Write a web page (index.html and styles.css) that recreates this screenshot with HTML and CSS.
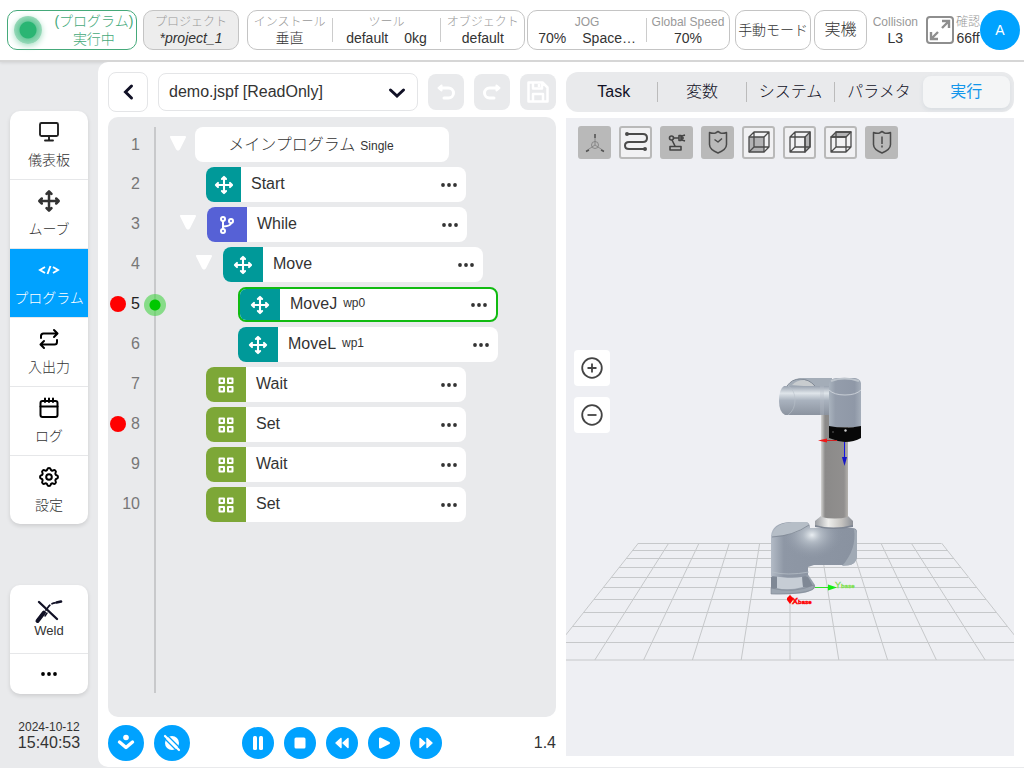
FILE: index.html
```html
<!DOCTYPE html>
<html lang="ja">
<head>
<meta charset="utf-8">
<meta name="viewport" content="width=device-width, initial-scale=1">
<title>demo.jspf</title>
<link rel="stylesheet" href="styles.css">
</head>
<body>
<svg class="defs" aria-hidden="true">
  <symbol id="i-move" viewBox="0 0 24 24"><path d="M12 3v18M3 12h18M9.500 4.800L12 2.300l2.500 2.500M9.500 19.200l2.500 2.500 2.500-2.500M4.800 9.500L2.300 12l2.500 2.500M19.200 9.500l2.500 2.500-2.500 2.500" fill="none" stroke="currentColor" stroke-width="2.500" stroke-linecap="round" stroke-linejoin="round"/></symbol>
  <symbol id="i-grid" viewBox="0 0 18 18"><path d="M2.500 2.500h4.500v4.500H2.500zM11 2.500h4.500v4.500H11zM2.500 11h4.500v4.500H2.500zM11 11h4.500v4.500H11z" fill="none" stroke="currentColor" stroke-width="2" stroke-linejoin="round"/></symbol>
  <symbol id="i-dots" viewBox="0 0 18 6"><circle cx="3" cy="3" r="1.900"/><circle cx="9" cy="3" r="1.900"/><circle cx="15" cy="3" r="1.900"/></symbol>
  <symbol id="i-tri" viewBox="0 0 18 15"><path d="M2 1h14L10 13q-1 1.400-2 0z" fill="#fff" stroke="#fff" stroke-width="2" stroke-linejoin="round"/></symbol>
</svg>

<header class="topbar">
  <button class="box status"><span class="lamp"></span><span class="stack status-text"><span>(プログラム)</span><span>実行中</span></span></button>
  <button class="box stack project"><span class="cap">プロジェクト</span><em>*project_1</em></button>
  <div class="box group setup">
    <div class="stack cell"><span class="cap">インストール</span><span>垂直</span></div>
    <div class="stack cell wide"><span class="cap">ツール</span><span class="pair"><span>default</span><span>0kg</span></span></div>
    <div class="stack cell"><span class="cap">オブジェクト</span><span>default</span></div>
  </div>
  <div class="box group jog">
    <div class="stack cell jog-cell"><span class="cap">JOG</span><span class="pair"><span>70%</span><span>Space…</span></span></div>
    <div class="stack cell"><span class="cap">Global Speed</span><span>70%</span></div>
  </div>
  <button class="box mode">手動モード</button>
  <button class="box real">実機</button>
  <div class="stack collision"><span class="cap">Collision</span><span>L3</span></div>
  <button class="expand" aria-label="全画面">
    <svg width="30" height="30" viewBox="0 0 30 30" fill="none" stroke="#8e8e8e" stroke-width="2"><rect x="2" y="2" width="26" height="26" rx="3"/><path d="M17 6h7v7M24 6l-7 7M6 17v7h7M6 24l7-7" stroke-width="2.400"/></svg>
  </button>
  <div class="stack check"><span class="cap">確認</span><span>66ff</span></div>
  <button class="avatar">A</button>
</header>

<div class="shell">
  <aside class="side">
    <nav class="card nav">
      <a href="#dash" class="nav-item"><svg width="24" height="24" viewBox="0 0 24 24" fill="none" stroke="#222" stroke-width="1.900" stroke-linecap="round"><rect x="3" y="3" width="18" height="13" rx="1.500"/><path d="M12 16v4M8 20.500h8"/></svg>儀表板</a>
      <a href="#move" class="nav-item"><svg width="24" height="24"><use href="#i-move"/></svg>ムーブ</a>
      <a href="#program" class="nav-item active" aria-current="page"><svg width="24" height="24" viewBox="0 0 24 24" fill="none" stroke="#fff" stroke-width="1.900"><path d="M8 9l-5 3 5 3M16 9l5 3-5 3M13.500 8l-3 8"/></svg>プログラム</a>
      <a href="#io" class="nav-item"><svg width="24" height="24" viewBox="0 0 24 24" fill="none" stroke="#000" stroke-width="2" stroke-linecap="round" stroke-linejoin="round"><path d="M17 3l3.500 3.500L17 10M4 11V9q0-2.500 2.500-2.500H20M7 21l-3.500-3.500L7 14M20 13v2q0 2.500-2.500 2.500H4"/></svg>入出力</a>
      <a href="#log" class="nav-item"><svg width="24" height="24" viewBox="0 0 24 24" fill="none" stroke="#000" stroke-width="2" stroke-linecap="round"><rect x="3.500" y="5" width="17" height="16" rx="2"/><path d="M3.500 10.500h17M8 2.500V6M12 2.500V6M16 2.500V6"/></svg>ログ</a>
      <a href="#settings" class="nav-item"><svg width="24" height="24" viewBox="0 0 24 24" fill="none" stroke="#000" stroke-width="2" stroke-linejoin="round"><circle cx="12" cy="12" r="2.800"/><path d="M10.325 4.317c.426-1.756 2.924-1.756 3.350 0a1.724 1.724 0 0 0 2.573 1.066c1.543-.94 3.310.826 2.370 2.370a1.724 1.724 0 0 0 1.065 2.572c1.756.426 1.756 2.924 0 3.350a1.724 1.724 0 0 0-1.066 2.573c.94 1.543-.826 3.310-2.370 2.370a1.724 1.724 0 0 0-2.572 1.065c-.426 1.756-2.924 1.756-3.350 0a1.724 1.724 0 0 0-2.573-1.066c-1.543.94-3.310-.826-2.370-2.370a1.724 1.724 0 0 0-1.065-2.572c-1.756-.426-1.756-2.924 0-3.350a1.724 1.724 0 0 0 1.066-2.573c-.94-1.543.826-3.310 2.370-2.370 1 .608 2.296.07 2.572-1.065z"/></svg>設定</a>
    </nav>
    <div class="card tools">
      <button class="weld"><svg width="30" height="24" viewBox="0 0 30 24" fill="none" stroke="#111126" stroke-linecap="round"><path d="M5 2l18 17" stroke-width="2.400"/><path d="M3.500 21L10 12.500" stroke-width="4"/><path d="M12 10L15 6Q18 3 21 2.800" stroke-width="1.800" stroke-dasharray="6 2.800"/><path d="M22.500 2.500L27 1.500" stroke-width="2.600"/><path d="M11 16l2-3" stroke-width="1.500"/></svg>Weld</button>
      <button class="more" aria-label="その他"><svg width="18" height="6"><use href="#i-dots"/></svg></button>
    </div>
    <div class="clock"><span class="date">2024-10-12</span><time>15:40:53</time></div>
  </aside>

  <main class="main">
    <section class="editor">
      <div class="filebar">
        <button class="back" aria-label="戻る"><svg width="12" height="18" viewBox="0 0 12 18" fill="none" stroke="#111126" stroke-width="3" stroke-linecap="round"><path d="M9.500 3L3.500 9l6 6"/></svg></button>
        <label class="file"><select aria-label="ファイル"><option>demo.jspf [ReadOnly]</option></select><svg class="chev" width="18" height="12" viewBox="0 0 18 12" fill="none" stroke="#111126" stroke-width="3" stroke-linecap="round"><path d="M2.500 3L9 9l6.500-6"/></svg></label>
        <button class="tool" aria-label="元に戻す"><svg width="20" height="20" viewBox="0 0 20 20" fill="none" stroke="#fff" stroke-width="3" stroke-linecap="round" stroke-linejoin="round"><path d="M4 6h8.500a5 5 0 0 1 0 10H8"/><path d="M5.500 3.500v5L2.500 6z" fill="#fff" stroke-width="2"/></svg></button>
        <button class="tool" aria-label="やり直し"><svg width="20" height="20" viewBox="0 0 20 20" fill="none" stroke="#fff" stroke-width="3" stroke-linecap="round" stroke-linejoin="round"><path d="M16 6H7.500a5 5 0 0 0 0 10H12"/><path d="M14.500 3.500v5l3-2.500z" fill="#fff" stroke-width="2"/></svg></button>
        <button class="tool" aria-label="保存"><svg width="24" height="24" viewBox="0 0 24 24" fill="none" stroke="#fff" stroke-width="2.500" stroke-linejoin="round"><path d="M2.500 2.500h14l5 5v14h-19zM7 2.500v6h9v-6M7 21v-7h10v7M13 4v3"/></svg></button>
      </div>

      <div class="program">
        <ol class="rows">
          <li class="row root"><span class="num">1</span><svg class="tri" width="18" height="15"><use href="#i-tri"/></svg><div class="node main-node">メインプログラム <small>Single</small></div></li>
          <li class="row leaf"><span class="num">2</span><div class="node"><span class="ico teal narrow"><svg width="20" height="20"><use href="#i-move"/></svg></span>Start<button class="dots" aria-label="メニュー"><svg width="18" height="6"><use href="#i-dots"/></svg></button></div></li>
          <li class="row l1"><span class="num">3</span><svg class="tri" width="18" height="15"><use href="#i-tri"/></svg><div class="node"><span class="ico indigo"><svg width="16" height="20" viewBox="0 0 16 20" fill="none" stroke="#fff" stroke-width="2"><circle cx="4" cy="4" r="2"/><circle cx="4" cy="16" r="2"/><circle cx="12" cy="6" r="2"/><path d="M4 6v8M12 8q0 3-8 3.500"/></svg></span>While<button class="dots" aria-label="メニュー"><svg width="18" height="6"><use href="#i-dots"/></svg></button></div></li>
          <li class="row l2"><span class="num">4</span><svg class="tri" width="18" height="15"><use href="#i-tri"/></svg><div class="node"><span class="ico teal"><svg width="20" height="20"><use href="#i-move"/></svg></span>Move<button class="dots" aria-label="メニュー"><svg width="18" height="6"><use href="#i-dots"/></svg></button></div></li>
          <li class="row l3 break current"><span class="num">5</span><div class="node"><span class="ico teal"><svg width="20" height="20"><use href="#i-move"/></svg></span>MoveJ <small>wp0</small><button class="dots" aria-label="メニュー"><svg width="18" height="6"><use href="#i-dots"/></svg></button></div></li>
          <li class="row l3"><span class="num">6</span><div class="node"><span class="ico teal"><svg width="20" height="20"><use href="#i-move"/></svg></span>MoveL <small>wp1</small><button class="dots" aria-label="メニュー"><svg width="18" height="6"><use href="#i-dots"/></svg></button></div></li>
          <li class="row leaf"><span class="num">7</span><div class="node"><span class="ico green"><svg width="18" height="18"><use href="#i-grid"/></svg></span>Wait<button class="dots" aria-label="メニュー"><svg width="18" height="6"><use href="#i-dots"/></svg></button></div></li>
          <li class="row leaf break"><span class="num">8</span><div class="node"><span class="ico green"><svg width="18" height="18"><use href="#i-grid"/></svg></span>Set<button class="dots" aria-label="メニュー"><svg width="18" height="6"><use href="#i-dots"/></svg></button></div></li>
          <li class="row leaf"><span class="num">9</span><div class="node"><span class="ico green"><svg width="18" height="18"><use href="#i-grid"/></svg></span>Wait<button class="dots" aria-label="メニュー"><svg width="18" height="6"><use href="#i-dots"/></svg></button></div></li>
          <li class="row leaf"><span class="num">10</span><div class="node"><span class="ico green"><svg width="18" height="18"><use href="#i-grid"/></svg></span>Set<button class="dots" aria-label="メニュー"><svg width="18" height="6"><use href="#i-dots"/></svg></button></div></li>
        </ol>
      </div>

      <div class="player">
        <button class="round big" aria-label="現在行へ"><svg width="20" height="20" viewBox="0 0 20 20"><circle cx="10" cy="4.500" r="2.800" fill="#fff"/><path d="M3.500 9l6.500 5.500L16.500 9" fill="none" stroke="#fff" stroke-width="3.400" stroke-linecap="round" stroke-linejoin="round"/></svg></button>
        <button class="round big" aria-label="ブレークポイント無効"><svg width="20" height="20" viewBox="0 0 20 20"><circle cx="10" cy="10" r="7" fill="#fff"/><path d="M4.500 1.500l15 15M.5 3.500l15 15" stroke="#00a2ff" stroke-width="1.400"/><path d="M3 3l14 14" stroke="#fff" stroke-width="2.200" stroke-linecap="round"/></svg></button>
        <div class="transport">
          <button class="round" aria-label="一時停止"><svg width="16" height="16" viewBox="0 0 16 16" fill="#fff"><rect x="3" y="1" width="4" height="14" rx="1.500"/><rect x="9" y="1" width="4" height="14" rx="1.500"/></svg></button>
          <button class="round" aria-label="停止"><svg width="16" height="16" viewBox="0 0 16 16" fill="#fff"><rect x="2.500" y="2.500" width="11" height="11" rx="1.500"/></svg></button>
          <button class="round" aria-label="前へ"><svg width="16" height="16" viewBox="0 0 16 16" fill="#fff" stroke="#fff" stroke-width="1.400" stroke-linejoin="round"><path d="M7 3.500v9L2 8zM14 3.500v9L9 8z"/></svg></button>
          <button class="round" aria-label="再生"><svg width="16" height="16" viewBox="0 0 16 16" fill="#fff" stroke="#fff" stroke-width="2" stroke-linejoin="round"><path d="M4 3.500v9L13 8z"/></svg></button>
          <button class="round" aria-label="次へ"><svg width="16" height="16" viewBox="0 0 16 16" fill="#fff" stroke="#fff" stroke-width="1.400" stroke-linejoin="round"><path d="M2 3.500v9L7 8zM9 3.500v9L14 8z"/></svg></button>
        </div>
        <output class="value">1.4</output>
      </div>
    </section>

    <section class="viewer">
      <div class="tabs" role="tablist">
        <button role="tab">Task</button>
        <button role="tab">変数</button>
        <button role="tab">システム</button>
        <button role="tab">パラメタ</button>
        <button role="tab" class="on" aria-selected="true">実行</button>
      </div>
      <div class="scene">
        <svg class="canvas" viewBox="566 118 448 638" preserveAspectRatio="xMidYMid slice" role="img" aria-label="ロボット">
          <defs>
            <linearGradient id="tube" x2="0" y2="1"><stop offset="0" stop-color="#9aa3b0"/><stop offset=".25" stop-color="#dfe5ea"/><stop offset=".5" stop-color="#a9b2be"/><stop offset="1" stop-color="#8b939f"/></linearGradient>
            <linearGradient id="col"><stop offset="0" stop-color="#d4d4d2"/><stop offset=".15" stop-color="#8b8a89"/><stop offset=".85" stop-color="#918f8e"/><stop offset="1" stop-color="#b5b2ae"/></linearGradient>
            <linearGradient id="wrist"><stop offset="0" stop-color="#a9b3be"/><stop offset=".2" stop-color="#949dab"/><stop offset=".8" stop-color="#8f98a7"/><stop offset="1" stop-color="#a5aeba"/></linearGradient>
            <linearGradient id="shoulder"><stop offset="0" stop-color="#b3bbc6"/><stop offset=".15" stop-color="#8e97a5"/><stop offset="1" stop-color="#8992a0"/></linearGradient>
            <linearGradient id="collar"><stop offset="0" stop-color="#9a9da2"/><stop offset=".35" stop-color="#eeeeec"/><stop offset=".7" stop-color="#c5c3c0"/><stop offset="1" stop-color="#8c9097"/></linearGradient>
            <radialGradient id="shine" gradientUnits="userSpaceOnUse" cx="812" cy="535" r="30" gradientTransform="translate(0 107) scale(1 .8)"><stop offset="0" stop-color="#e9eef2"/><stop offset=".3" stop-color="#bec6cf" stop-opacity=".75"/><stop offset="1" stop-color="#8f98a6" stop-opacity="0"/></radialGradient>
          </defs>
          <g stroke="#c6c8ca" stroke-width="1" fill="none">
            <path d="M638 543.500h303M632 550.500h316M626 558.500h328M619 567.500h342M611 577.500h357M603 587.500h374M594 599.500h392M583 612.500h413M572 626.500h436M560 642.500h461M546 660h488"/>
            <path d="M638.500 543L546 660M668.800 543L594.800 660M699.100 543L643.600 660M729.400 543L692.400 660M759.700 543L741.200 660M790 543V660M820.300 543L838.800 660M850.600 543L887.600 660M880.900 543L936.400 660M911.200 543L985.200 660M941.500 543L1034 660"/>
          </g>
          <path d="M771 577l6-4h30l8 12q1 4-5 6-8 4-39 3z" fill="#98a1ad"/>
          <path d="M776 575h26l1 12q-14 4-27 1z" fill="#c6cdd5"/>
          <path d="M771 577l6-3v14l-6 2zM802 575l6 2 6 11-11-1z" fill="#7f8895"/>
          <path d="M771 588q22 6 43-3v3q-5 6-43 6z" fill="#9ca5b0" stroke="#7f8894" stroke-width=".6"/>
          <g id="joint">
            <path d="M771 536q1-13 19-14h16q4 1 4 6h42q5 0 5 4v24q-1 9-9 9h-34l-6 2v8q-9 5-37 1z" fill="url(#shoulder)"/>
            <path d="M771 536q1-13 19-14h16q4 1 4 6h42q5 0 5 4v24q-1 9-9 9h-34l-6 2v8q-9 5-37 1z" fill="url(#shine)"/>
          </g>
          <path d="M854 529q3 20-12 37 14 0 15-9v-24q0-3-3-4z" fill="#a1aab5"/>
          <path d="M772 535q3-12 20-13h15l2 3q-13 11-37 11z" fill="#b6bec7"/>
          <path d="M772 537q21-1 37-12" stroke="#7e8793" stroke-width=".8" fill="none"/>
          <path d="M772 572q15 4 37 0" stroke="#b4bcc5" stroke-width=".8" fill="none"/>
          <path d="M815 521l6-5h27l5 5v5q-19 4-38 0z" fill="url(#collar)"/>
          <path d="M815 525q18 5 38 0v2q-18 4-38 0z" fill="#7e8693"/>
          <path d="M821 410h27v107q-13 3-27 0z" fill="url(#col)"/>
          <path d="M787 387q5-9 17-9h28v34h-20z" fill="#a4adb8"/>
          <path d="M792 385q5-5 12-5 8 1 11 7z" fill="#c8cccf"/>
          <path d="M787 386q5-7 13-7 9 0 15 7" stroke="#818a96" stroke-width="1" fill="none"/>
          <path d="M784 386h45v29h-44q-6-3-6-14 0-12 5-15z" fill="url(#tube)"/>
          <path d="M788 386q7 4 7 14t-7 15M821 386v29M823 386v29" fill="none" stroke="#b9c1ca" stroke-width=".6"/>
          <path d="M829 384q1-6 8-6h16q7 0 8 5v44h-32z" fill="url(#wrist)"/>
          <path d="M831 381q13-5 28 0" fill="none" stroke="#bec5cd" stroke-width="2"/>
          <path d="M829 390q5 5 16 5t16-5" fill="none" stroke="#d5dbe1" stroke-width=".8"/>
          <path d="M829 426q16 3 32 0v12q-7 4-16 4-9-1-16-4z" fill="#080808"/>
          <circle cx="845.500" cy="430.500" r="1.200" fill="#ccc"/><circle cx="833" cy="432" r=".7" fill="#777"/>
          <path d="M827 440.500h10" stroke="#c22"/><path d="M818 440.500l9-2v4z" fill="#f01818"/>
          <path d="M844.500 442v17" stroke="#1414e6"/><path d="M842 457h5l-2.500 9z" fill="#1616c8"/>
          <path d="M815 587.500h14" stroke="#33df2b"/><path d="M828 584.500l9 3-9 3z" fill="#12ee12"/>
          <path d="M787 598l3-3 3 3v2l-3 4-3-4z" fill="#f00"/>
          <text x="835" y="588" class="axis y">Y<tspan class="sub">base</tspan></text>
          <text x="792" y="604" class="axis x">X<tspan class="sub">base</tspan></text>
        </svg>
        <div class="view-tools">
          <button class="vt solid" aria-label="座標軸"><svg width="29" height="29" viewBox="2 2 29 29" fill="none" stroke="#7c7c7c" stroke-width=".8"><circle cx="17" cy="19" r="3.500"/><path d="M17 19V8M17 19l-9 6M17 19l9 6"/><path d="M17 8v4M8 25.500l3-1.500M26 25.500l-3-1.500" stroke="#555" stroke-width="1.500"/></svg></button>
          <button class="vt" aria-label="軌跡"><svg width="29" height="29" viewBox="2 2 29 29" fill="none" stroke="#4a4a4a" stroke-width="2"><path d="M8 8h16q4 0 4 4t-4 4H10q-4 0-4 3.500T10 23h16"/><circle cx="8" cy="8" r="1" fill="#4a4a4a"/><circle cx="26" cy="23" r="1" fill="#4a4a4a"/></svg></button>
          <button class="vt solid" aria-label="ロボット表示"><svg width="29" height="29" viewBox="2 2 29 29" fill="none" stroke="#444" stroke-width="1.600" stroke-linejoin="round"><circle cx="11.500" cy="12" r="2"/><path d="M13.500 12H19M12 14l3 6M19 9.500v5h2v-5zM25 9l-3 1v4l3 1M10 20.500h11v3.500H10zM22 12h2"/></svg></button>
          <button class="vt solid" aria-label="安全"><svg width="29" height="29" viewBox="2 2 29 29" fill="none" stroke="#4a4a4a" stroke-width="1.500" stroke-linejoin="round"><path d="M17 5.500l2.500 1.500q3 .8 6-.5v12q0 5-8.500 8.500-8.500-3.500-8.500-8.500v-12q3 1.300 6 .5zM13.500 13.500l3.500 2.500 4-3.500"/></svg></button>
          <button class="vt" aria-label="前面"><svg width="29" height="29" viewBox="2 2 29 29" fill="none" stroke="#4a4a4a" stroke-width="1.300" stroke-linejoin="round"><path d="M7 11h15v15H7z" fill="#b2b2b4"/><path d="M12 6h15v15H12zM7 11l5-5M22 11l5-5M22 26l5-5M7 26l5-5"/></svg></button>
          <button class="vt" aria-label="側面"><svg width="29" height="29" viewBox="2 2 29 29" fill="none" stroke="#4a4a4a" stroke-width="1.300" stroke-linejoin="round"><path d="M22 11l5-5v15l-5 5z" fill="#b2b2b4"/><path d="M7 11h15v15H7zM12 6h15v15H12zM7 11l5-5M7 26l5-5"/></svg></button>
          <button class="vt" aria-label="上面"><svg width="29" height="29" viewBox="2 2 29 29" fill="none" stroke="#4a4a4a" stroke-width="1.300" stroke-linejoin="round"><path d="M7 11l5-5h15l-5 5z" fill="#b2b2b4"/><path d="M7 11h15v15H7zM12 6h15v15H12zM22 26l5-5M7 26l5-5"/></svg></button>
          <button class="vt solid" aria-label="警告"><svg width="29" height="29" viewBox="2 2 29 29" fill="none" stroke="#4a4a4a" stroke-width="1.500" stroke-linejoin="round"><path d="M17 5.500l2.500 1.500q3 .8 6-.5v12q0 5-8.500 8.500-8.500-3.500-8.500-8.500v-12q3 1.300 6 .5zM17 10.500v7.500M17 19.500v2"/></svg></button>
        </div>
        <div class="zoomers">
          <button class="zm" aria-label="拡大"><svg width="24" height="24" viewBox="0 0 24 24" fill="none" stroke="#444" stroke-width="1.800"><circle cx="12" cy="12" r="9.800"/><path d="M12 7.500v9M7.500 12h9"/></svg></button>
          <button class="zm" aria-label="縮小"><svg width="24" height="24" viewBox="0 0 24 24" fill="none" stroke="#444" stroke-width="1.800"><circle cx="12" cy="12" r="9.800"/><path d="M7.500 12h9"/></svg></button>
        </div>
      </div>
    </section>
  </main>
</div>
</body>
</html>
```
FILE: styles.css
```css
* { box-sizing: border-box; }

body {
  margin: 0;
  min-height: 100vh;
  display: flex;
  flex-direction: column;
  background: #e9eaec;
  color: #333;
  font: 300 14px/16px "Liberation Sans", "Noto Sans CJK JP", sans-serif;
}

button, select {
  margin: 0;
  padding: 0;
  border: 0;
  background: none;
  color: inherit;
  font: inherit;
}

svg { display: block; flex: none; }
.defs { position: absolute; width: 0; height: 0; }

/* Top bar */
.topbar {
  display: flex;
  align-items: center;
  height: 62px;
  padding: 0 4px 0 7px;
  background: #fff;
  border-bottom: 2px solid #d6d6d6;
  box-shadow: 0 1px 3px rgba(0, 0, 0, .1);
  white-space: nowrap;
}

.box {
  height: 40px;
  border: 1px solid #c4c4c4;
  border-radius: 10px;
  min-width: 0;
}

.stack {
  display: flex;
  flex-direction: column;
  align-items: center;
  justify-content: center;
}

.cap { color: #999; font-size: 12px; }

.status {
  flex: 1 1 130px;
  display: flex;
  align-items: center;
  justify-content: space-between;
  padding: 0 3px 0 6px;
  border-color: #45a97a;
  color: #45a97a;
}
.status-text { line-height: 18px; }

.lamp {
  width: 28px;
  height: 28px;
  border-radius: 50%;
  background: radial-gradient(circle, #2ab573 0 8px, #6fcb9f 9px, #98d9b9 14px);
  box-shadow: 0 2px 6px #a9e0c5;
}

.project { flex: 1 1 95px; margin-left: 6px; background: #ededed; }
.group { display: flex; align-items: center; }
.setup { flex: 2 1 278px; margin-left: 8px; }
.jog { flex: 2 1 202px; margin-left: 2px; }
.cell { flex: 1 1 84px; min-width: 0; }
.cell.wide { flex-basis: 109px; }
.jog-cell { flex-basis: 119px; }
.cell + .cell { border-left: 1px solid #ccc; height: 24px; }
.pair { display: flex; gap: 16px; }
.mode { flex: 1 1 76px; margin-left: 5px; }
.real { flex: 1 1 52px; margin-left: 3px; font-size: 16px; }
.collision { margin-left: 6px; }
.expand { margin-left: 7px; }
.check { margin-left: 1px; }
.avatar {
  flex: none;
  width: 40px;
  height: 40px;
  border-radius: 50%;
  background: #00a2ff;
  color: #fff;
}

/* Side bar */
.shell { flex: 1; display: flex; min-height: 0; padding-bottom: 1px; }

.side {
  flex: none;
  width: 98px;
  padding: 49px 10px 16px;
  display: flex;
  flex-direction: column;
}

.card {
  background: #fff;
  border-radius: 10px;
  box-shadow: 0 2px 4px rgba(0, 0, 0, .12);
  overflow: hidden;
}

.nav-item {
  display: flex;
  flex-direction: column;
  align-items: center;
  gap: 8px;
  height: 69px;
  padding-top: 9px;
  border-bottom: 1px solid #e6e7e9;
  color: #333;
  line-height: 16px;
  text-decoration: none;
}
.nav-item:last-child { border: 0; height: 68px; }
.nav-item.active { background: #00a2ff; color: #fff; }

.tools { margin-top: 61px; display: flex; flex-direction: column; }
.weld {
  display: flex;
  flex-direction: column;
  align-items: center;
  height: 69px;
  padding-top: 15px;
  border-bottom: 1px solid #e6e7e9;
  font-size: 13px;
  line-height: 14px;
}
.more { height: 40px; display: grid; place-items: center; }

.clock {
  margin-top: auto;
  display: flex;
  flex-direction: column;
  align-items: center;
  font-size: 16px;
}
.date { font-size: 12px; }

/* Main area */
.main {
  flex: 1;
  min-width: 0;
  display: grid;
  grid-template-columns: 1fr 1fr;
  gap: 10px;
  padding: 10px 10px 6px;
  background: #fff;
  border-radius: 10px 0 0 10px;
}

.editor, .viewer { display: flex; flex-direction: column; min-width: 0; }
.viewer { padding-bottom: 5px; }

.filebar { display: flex; align-items: center; gap: 10px; }
.back {
  flex: none;
  width: 40px;
  height: 40px;
  display: grid;
  place-items: center;
  border: 1px solid #e4e5e7;
  border-radius: 8px;
}
.file { flex: 1; display: flex; position: relative; }
.file select {
  flex: 1;
  height: 38px;
  padding: 0 40px 0 10px;
  border: 1px solid #e4e5e7;
  border-radius: 8px;
  background: #fff;
  font-size: 16px;
  appearance: none;
}
.chev { position: absolute; right: 12px; top: 14px; pointer-events: none; }
.tool {
  flex: none;
  width: 36px;
  height: 36px;
  display: grid;
  place-items: center;
  border-radius: 8px;
  background: #e9eaec;
}

.program {
  flex: 1;
  position: relative;
  margin-top: 5px;
  padding: 10px 0;
  background: #e9eaec;
  border-radius: 10px;
}
.program::before {
  content: "";
  position: absolute;
  left: 46px;
  top: 10px;
  bottom: 24px;
  width: 2px;
  background: #c8c9cb;
}

.rows {
  display: flex;
  flex-direction: column;
  gap: 5px;
  margin: 0;
  padding: 0;
  list-style: none;
}
.row { position: relative; display: flex; align-items: center; height: 35px; }
.num {
  width: 32px;
  margin-right: 66px;
  padding-bottom: 2px;
  color: #777;
  font-size: 16px;
  text-align: right;
}
.tri { margin: 0 10px 4px 0; }
.root .num { margin-right: 29px; padding: 0; }
.root .tri { margin: 0 8px 2px 0; }
.l1 .num { margin-right: 39px; }
.l2 .num { margin-right: 55px; }
.l3 .num { margin-right: 98px; }

.node {
  flex: 0 1 260px;
  height: 35px;
  display: flex;
  overflow: hidden;
  background: #fff;
  border-radius: 8px;
  font-size: 16px;
  line-height: 33px;
}
.node small { margin-left: 6px; font-size: 12px; }
.main-node {
  flex-basis: 254px;
  justify-content: center;
  padding-right: 22px;
  line-height: 35px;
}
.main-node small { margin: 2px 0 0 5px; }
.ico {
  width: 40px;
  display: grid;
  place-items: center;
  margin-right: 10px;
  color: #fff;
}
.ico.narrow { width: 35px; }
.teal { background: #009999; }
.indigo { background: #5661d6; }
.green { background: #7da737; }
.dots { margin-left: auto; padding: 0 8px; fill: #333; }

.break::before {
  content: "";
  position: absolute;
  left: 2px;
  top: 9px;
  width: 16px;
  height: 16px;
  border-radius: 50%;
  background: #f00;
}
.current::after {
  content: "";
  position: absolute;
  left: 36px;
  width: 22px;
  height: 22px;
  border-radius: 50%;
  background: radial-gradient(circle, #00c800 5px, rgba(70, 210, 70, .6) 6px);
}
.current .num { color: #222; }
.current .node { border: 2px solid #11bb11; line-height: 29px; }

.player { display: flex; align-items: center; gap: 10px; height: 44px; padding-top: 8px; }
.round {
  flex: none;
  width: 32px;
  height: 32px;
  display: grid;
  place-items: center;
  border-radius: 50%;
  background: #00a2ff;
}
.round.big { width: 36px; height: 36px; }
.transport { display: flex; gap: 10px; margin-left: 42px; }
.value { margin-left: auto; font-size: 16px; }

/* Viewer */
.tabs {
  display: flex;
  align-items: center;
  height: 40px;
  padding: 0 4px;
  background: #e9eaec;
  border-radius: 12px;
  color: #111126;
  font-size: 16px;
}
.tabs button { flex: 1; height: 20px; white-space: nowrap; }
.tabs button + button { border-left: 1px solid #bbb; }
.tabs .on, .tabs button + .on {
  height: 32px;
  border: 0;
  border-radius: 8px;
  background: #f4f5f6;
  box-shadow: 0 2px 4px rgba(120, 150, 170, .15);
  color: #1296eb;
  font-weight: 400;
}

.scene {
  flex: 1;
  position: relative;
  margin-top: 6px;
  background: #eeeff3;
  overflow: hidden;
}
.canvas { position: absolute; inset: 0; width: 100%; height: 100%; }
.axis { font-size: 9px; font-weight: bold; }
.axis.x { fill: #f00; stroke: #f00; stroke-width: .4px; }
.axis.y { fill: #7fe04f; stroke: #7fe04f; stroke-width: .3px; font-weight: normal; }
.sub { font-size: 6px; font-weight: bold; }

.view-tools { position: relative; display: flex; gap: 8px; padding: 8px 12px; }
.vt {
  width: 33px;
  height: 33px;
  border: 2px solid #b9b9b9;
  border-radius: 3px;
  background: #f1f1f3;
}
.vt.solid { background: #b9b9b9; }

.zoomers {
  position: absolute;
  left: 8px;
  top: 232px;
  display: flex;
  flex-direction: column;
  gap: 11px;
}
.zm {
  width: 36px;
  height: 36px;
  display: grid;
  place-items: center;
  border-radius: 4px;
  background: #fff;
}
```
